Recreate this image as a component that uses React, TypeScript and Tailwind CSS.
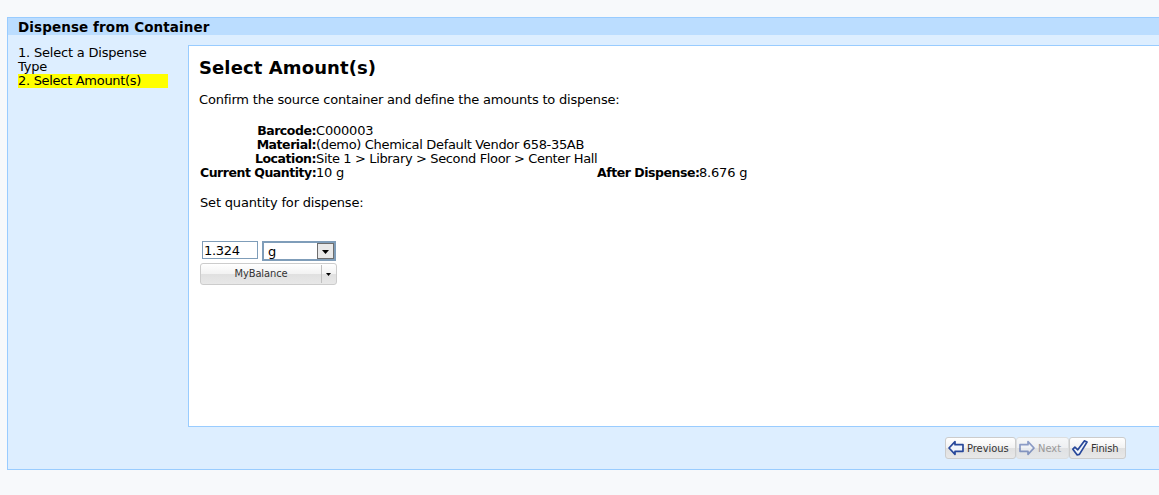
import React from "react";

const steps = [
  { label: "1. Select a Dispense Type", style: "w-[150px] tracking-[-0.2px]" },
  { label: "2. Select Amount(s)", style: "w-[150px] bg-[#ffff00] tracking-[-0.3px]" },
];

function Arrow({ flip = false }: { flip?: boolean }) {
  return (
    <svg width="16" height="16" viewBox="0 0 16 16" className={flip ? "shrink-0 -scale-x-100 opacity-50" : "shrink-0"}>
      <path d="M1 8 L7 1.7 V4.7 H15 V11.3 H7 V14.3 Z" fill="#f1f5fb" stroke="#27479a" strokeWidth="1.7" strokeLinejoin="round" />
    </svg>
  );
}

function Check() {
  return (
    <svg width="16" height="16" viewBox="0 0 16 16" className="shrink-0">
      <path d="M0.9 9.2 L2.9 7.2 L5.8 9.8 L12.3 0.9 L15 2.1 L7.4 14.4 L5.2 14.9 Z" fill="#f1f5fb" stroke="#27479a" strokeWidth="1.7" strokeLinejoin="round" />
    </svg>
  );
}

const buttonStyle =
  "flex h-[22px] items-center whitespace-nowrap rounded-[3px] border text-[11px] font-['DejaVu_Sans_Condensed','DejaVu_Sans',sans-serif] [font-stretch:condensed]";
const enabledStyle =
  "border-[#cccccc] bg-[linear-gradient(#ffffff_0%,#f2f2f2_50%,#e0e0e0_51%,#e8e8e8_100%)] text-[#333333]";
const disabledStyle =
  "border-[#dcdedf] bg-[linear-gradient(#f5f7f9_0%,#eeeff1_50%,#e0e1e3_51%,#e4e6e8_100%)] text-[#999999]";

export default function App() {
  return (
    <div className="h-[495px] w-[1159px] overflow-hidden bg-[#f7f9fb] pl-[7px] pt-[17px] font-['DejaVu_Sans',sans-serif] text-[13px] leading-[14px] text-black">
      <div className="flex h-[453px] flex-col border-y border-l border-[#99ccff] bg-[#ddeeff]">
        <div className="h-[17px] shrink-0 bg-[#bbddff] pl-[10px] text-[13.5px] font-bold leading-[18px]">
          <span className="tracking-[0.1px]">Dispense from Container</span>
        </div>
        <div className="flex h-[392px] shrink-0 pt-[10px]">
          <div className="w-[180px] shrink-0 pl-[10px] pt-[1px]">
            {steps.map((step) => (
              <div key={step.label} className={step.style}>
                {step.label}
              </div>
            ))}
          </div>
          <div className="h-[382px] grow border-y border-l border-[#99ccff] bg-white pl-[10px] pt-[11px]">
            <h1 className="text-[18px] font-bold leading-[21px] tracking-[0.1px]">Select Amount(s)</h1>
            <p className="mt-[15px] tracking-[-0.2px]">Confirm the source container and define the amounts to dispense:</p>
            <div className="ml-px mt-[17px] grid w-[548px] grid-cols-[116px_281px_102px_49px] whitespace-nowrap">
              <b className="text-right text-[12.5px] tracking-[-0.46px]">Barcode:</b>
              <span className="col-span-3 tracking-[-0.2px]">C000003</span>
              <b className="text-right text-[12.5px] tracking-[-0.46px]">Material:</b>
              <span className="col-span-3 tracking-[-0.33px]">(demo) Chemical Default Vendor 658-35AB</span>
              <b className="text-right text-[12.5px] tracking-[-0.46px]">Location:</b>
              <span className="col-span-3 tracking-[-0.36px]">Site 1 &gt; Library &gt; Second Floor &gt; Center Hall</span>
              <b className="text-right text-[12.5px] tracking-[-0.48px]">Current Quantity:</b>
              <span className="tracking-[-0.2px]">10 g</span>
              <b className="text-[12.5px] tracking-[-0.46px]">After Dispense:</b>
              <span className="tracking-[-0.2px]">8.676 g</span>
            </div>
            <p className="ml-px mt-4 tracking-[-0.18px]">Set quantity for dispense:</p>
            <div className="ml-[3px] mt-[31px] flex">
              <div className="h-[18px] w-[56px] border border-[#7f9db9] pl-px leading-[17px] tracking-[-0.3px]">1.324</div>
              <div className="ml-[4px] flex h-[20px] w-[74px] border-2 border-[#7f9db9]">
                <span className="grow pl-[4px] leading-[17px]">g</span>
                <span className="flex h-[16px] w-[17px] items-center justify-center border border-[#6d6d6d] bg-[#e9e9e9]">
                  <svg width="7" height="4" viewBox="0 0 7 4" className="mt-[2px]"><path d="M0 0H7L3.5 4Z" /></svg>
                </span>
              </div>
            </div>
            <div className={`${buttonStyle} ${enabledStyle} ml-px mt-[2px] w-[137px]`}>
              <span className="w-[120px] text-center tracking-[-0.1px]">MyBalance</span>
              <span className="flex h-[18px] grow items-center justify-center border-l border-[#c0c0c0] pr-px">
                <svg width="5" height="3" viewBox="0 0 5 3"><path d="M0 0H5L2.5 3Z" /></svg>
              </span>
            </div>
          </div>
        </div>
        <div className="flex pl-[937px] pt-[10px]">
          <div className={`${buttonStyle} ${enabledStyle} w-[71px] pl-[2px]`}>
            <Arrow />
            <span className="ml-[3px] pt-px">Previous</span>
          </div>
          <div className={`${buttonStyle} ${disabledStyle} w-[53px] pl-[2px]`}>
            <Arrow flip />
            <span className="ml-[3px] pt-px">Next</span>
          </div>
          <div className={`${buttonStyle} ${enabledStyle} w-[57px] pl-[2px]`}>
            <Check />
            <span className="ml-[3px] pt-px tracking-[-0.1px]">Finish</span>
          </div>
        </div>
      </div>
    </div>
  );
}
